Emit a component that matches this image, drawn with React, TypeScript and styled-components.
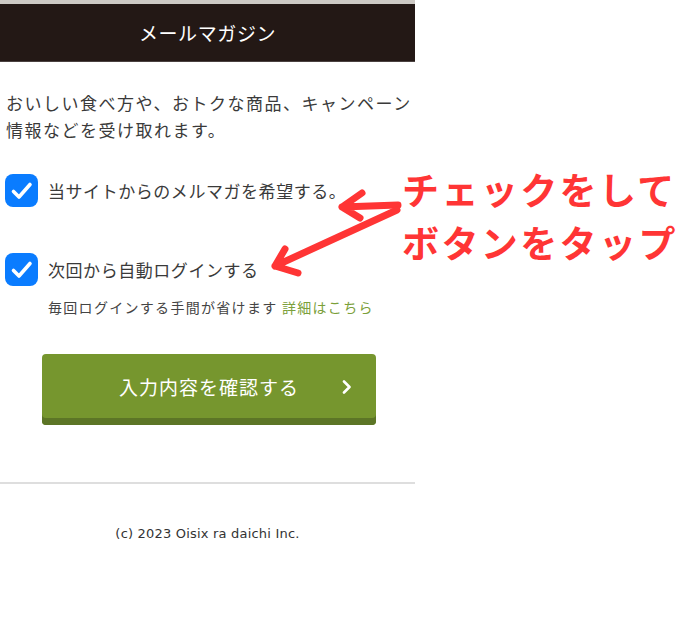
import styled, {createGlobalStyle} from "styled-components";

const GlobalStyle = createGlobalStyle`
  body {
    margin: 0;
    background: #fff;
    font-family: "Noto Sans CJK JP", "Noto Sans", sans-serif;
    color: #3a3a3a;
  }
`;

const Page = styled.div`
  position: relative;
  width: 678px;
  height: 630px;
  overflow: hidden;
`;

const Panel = styled.div`
  width: 415px;
  border-top: 4px solid #cdc9c4;
`;

const Header = styled.header`
  height: 57px;
  background: #231815;
  border-bottom: 1px solid #4a4140;
  display: flex;
  align-items: center;
  justify-content: center;
  color: #fff;
  font-size: 19px;
  letter-spacing: 0.6px;
`;

const Intro = styled.p`
  margin: 27px 0 0 6px;
  font-size: 17px;
  line-height: 27px;
  letter-spacing: 1.5px;
`;

const CheckList = styled.div`
  margin-top: 31px;
  padding-left: 5px;
  display: flex;
  flex-direction: column;
  gap: 46px;
`;

const CheckItem = styled.div`
  display: flex;
  flex-direction: column;
`;

const CheckRow = styled.label`
  display: flex;
  align-items: center;
  gap: 10px;
  font-size: 17px;
  letter-spacing: 0.55px;
`;

const Box = styled.span`
  width: 33px;
  height: 33px;
  border-radius: 8px;
  background: #0a7cff;
  display: flex;
  align-items: center;
  justify-content: center;
  flex-shrink: 0;
`;

const Note = styled.div`
  margin: 10px 0 0 43px;
  font-size: 14px;
  line-height: 22px;
  letter-spacing: 1.3px;
  color: #444;

  a {
    color: #7ba03a;
    text-decoration: none;
  }
`;

const SubmitButton = styled.button`
  margin: 36px 0 0 42px;
  width: 334px;
  height: 71px;
  border: none;
  border-radius: 4px;
  background: #76962e;
  box-shadow: inset 0 -7px 0 #5c7526;
  color: #fff;
  font-family: "Noto Sans CJK JP", sans-serif;
  font-size: 19px;
  letter-spacing: 1px;
  padding: 0 0 7px;
  position: relative;
  display: flex;
  align-items: center;
  justify-content: center;
`;

const Chevron = styled.svg`
  position: absolute;
  right: 24px;
  top: 26px;
`;

const Divider = styled.hr`
  margin: 57px 0 0;
  border: none;
  border-top: 2px solid #dedede;
`;

const Footer = styled.footer`
  margin-top: 42px;
  text-align: center;
  font-family: "DejaVu Sans", Verdana, sans-serif;
  font-size: 13px;
  letter-spacing: 0.2px;
  color: #333;
`;

const Arrows = styled.svg`
  position: absolute;
  left: 260px;
  top: 180px;
`;

const Callout = styled.div`
  position: absolute;
  left: 402px;
  top: 163px;
  color: #ff3535;
  font-family: "Noto Sans CJK JP", sans-serif;
  font-weight: 700;
  font-size: 37px;
  line-height: 53px;
  letter-spacing: 2.4px;
  white-space: nowrap;
`;

function Check() {
    return (
        <Box>
            <svg width="33" height="33" viewBox="0 0 33 33">
                <path d="M8.5 17.5 L14 23 L25 10.5" fill="none" stroke="#fff" strokeWidth="3.6"
                      strokeLinecap="round" strokeLinejoin="round"/>
            </svg>
        </Box>
    );
}

function App() {
    return (
        <Page>
            <GlobalStyle/>
            <Panel>
                <Header>メールマガジン</Header>
                <Intro>おいしい食べ方や、おトクな商品、キャンペーン情報などを受け取れます。</Intro>
                <CheckList>
                    <CheckItem>
                        <CheckRow><Check/>当サイトからのメルマガを希望する。</CheckRow>
                    </CheckItem>
                    <CheckItem>
                        <CheckRow><Check/>次回から自動ログインする</CheckRow>
                        <Note>毎回ログインする手間が省けます <a href="#">詳細はこちら</a></Note>
                    </CheckItem>
                </CheckList>
                <SubmitButton>
                    入力内容を確認する
                    <Chevron width="10" height="14" viewBox="0 0 10 14">
                        <path d="M2 1.5 L7.5 7 L2 12.5" fill="none" stroke="#fff" strokeWidth="2.6"
                              strokeLinecap="round" strokeLinejoin="round"/>
                    </Chevron>
                </SubmitButton>
                <Divider/>
                <Footer>(c) 2023 Oisix ra daichi Inc.</Footer>
            </Panel>
            <Arrows width="150" height="100" viewBox="0 0 150 100">
                <g fill="none" stroke="#ff3535" strokeWidth="7" strokeLinecap="round" strokeLinejoin="round">
                    <path d="M138 25 L82 27 M102 13 L82 27 L100 38"/>
                    <path d="M137 30 L15 86 M25 69 L15 86 L38 93"/>
                </g>
            </Arrows>
            <Callout>チェックをして<br/>ボタンをタップ</Callout>
        </Page>
    );
}

export default App;
